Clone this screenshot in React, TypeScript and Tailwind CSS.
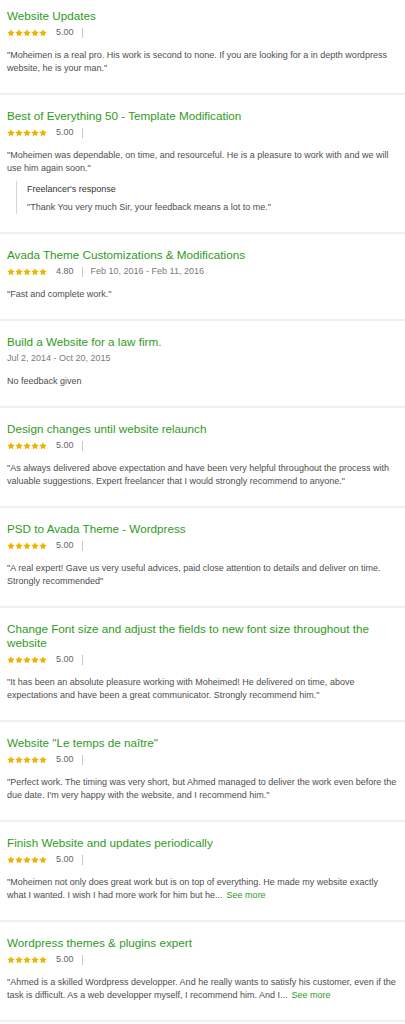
import { Fragment } from "react"

type Review = {
  title: string
  rating?: string
  dates?: string
  text: string
  seeMore?: boolean
  response?: string
}

const reviews: Review[] = [
  {
    title: "Website Updates",
    rating: "5.00",
    text: "\"Moheimen is a real pro. His work is second to none. If you are looking for a in depth wordpress website, he is your man.\"",
  },
  {
    title: "Best of Everything 50 - Template Modification",
    rating: "5.00",
    text: "\"Moheimen was dependable, on time, and resourceful. He is a pleasure to work with and we will use him again soon.\"",
    response: "\"Thank You very much Sir, your feedback means a lot to me.\"",
  },
  {
    title: "Avada Theme Customizations & Modifications",
    rating: "4.80",
    dates: "Feb 10, 2016 - Feb 11, 2016",
    text: "\"Fast and complete work.\"",
  },
  {
    title: "Build a Website for a law firm.",
    dates: "Jul 2, 2014 - Oct 20, 2015",
    text: "No feedback given",
  },
  {
    title: "Design changes until website relaunch",
    rating: "5.00",
    text: "\"As always delivered above expectation and have been very helpful throughout the process with valuable suggestions. Expert freelancer that I would strongly recommend to anyone.\"",
  },
  {
    title: "PSD to Avada Theme - Wordpress",
    rating: "5.00",
    text: "\"A real expert! Gave us very useful advices, paid close attention to details and deliver on time. Strongly recommended\"",
  },
  {
    title: "Change Font size and adjust the fields to new font size throughout the website",
    rating: "5.00",
    text: "\"It has been an absolute pleasure working with Moheimed! He delivered on time, above expectations and have been a great communicator. Strongly recommend him.\"",
  },
  {
    title: "Website \"Le temps de naître\"",
    rating: "5.00",
    text: "\"Perfect work. The timing was very short, but Ahmed managed to deliver the work even before the due date. I'm very happy with the website, and I recommend him.\"",
  },
  {
    title: "Finish Website and updates periodically",
    rating: "5.00",
    text: "\"Moheimen not only does great work but is on top of everything. He made my website exactly what I wanted. I wish I had more work for him but he...",
    seeMore: true,
  },
  {
    title: "Wordpress themes & plugins expert",
    rating: "5.00",
    text: "\"Ahmed is a skilled Wordpress developper. And he really wants to satisfy his customer, even if the task is difficult. As a web developper myself, I recommend him. And I...",
    seeMore: true,
  },
]

function Star() {
  return (
    <svg viewBox="0 0 24 24" className="h-[8px] w-[8px] fill-[#eeb300]">
      <path d="M12 .8l3.4 7 7.7 1-5.6 5.4 1.4 7.7L12 18.2 5.1 21.9l1.4-7.7L.9 8.8l7.7-1z" />
    </svg>
  )
}

function Meta({ rating, dates }: { rating?: string; dates?: string }) {
  return (
    <div className="mt-[3px] flex h-[14px] items-center text-[9px] text-[#656565]">
      {rating && (
        <>
          <div className="flex">
            {[0, 1, 2, 3, 4].map((i) => (
              <Star key={i} />
            ))}
          </div>
          <span className="ml-[9px]">{rating}</span>
          <span className="ml-[8px] h-[10px] w-px bg-[#c8c8c8]" />
        </>
      )}
      {dates && <span className={rating ? "ml-[8px] text-[#7a7a7a]" : "text-[#7a7a7a]"}>{dates}</span>}
    </div>
  )
}

export default function App() {
  return (
    <div className="w-[405px] bg-white font-['Liberation_Sans',Arial,sans-serif]">
      {reviews.map((r, i) => (
        <Fragment key={i}>
          <section
            className={
              (i === 0 ? "pt-[9px] " : "pt-[14px] ") +
              "border-b-2 border-[#eef0ee] px-[7px] pb-[18px]"
            }
          >
            <h3 className="text-[11.7px] font-medium leading-[14px] text-[#2f9b1c]">{r.title}</h3>
            <Meta rating={r.rating} dates={r.dates} />
            <div className="mt-[9px] text-[9px] leading-[13px] text-[#4e4e4e]">
              <span>{r.text}</span>
              {r.seeMore && <span className="ml-[4px] text-[#2f9b1c]">See more</span>}
            </div>
            {r.response && (
              <div className="ml-[9px] mt-[6px] border-l border-[#d6d6d6] pl-[10px] pt-[2px]">
                <div className="text-[9px] leading-[13px] text-[#333]">Freelancer's response</div>
                <div className="mt-[5px] text-[9px] leading-[13px] text-[#4e4e4e]">{r.response}</div>
              </div>
            )}
          </section>
        </Fragment>
      ))}
    </div>
  )
}
